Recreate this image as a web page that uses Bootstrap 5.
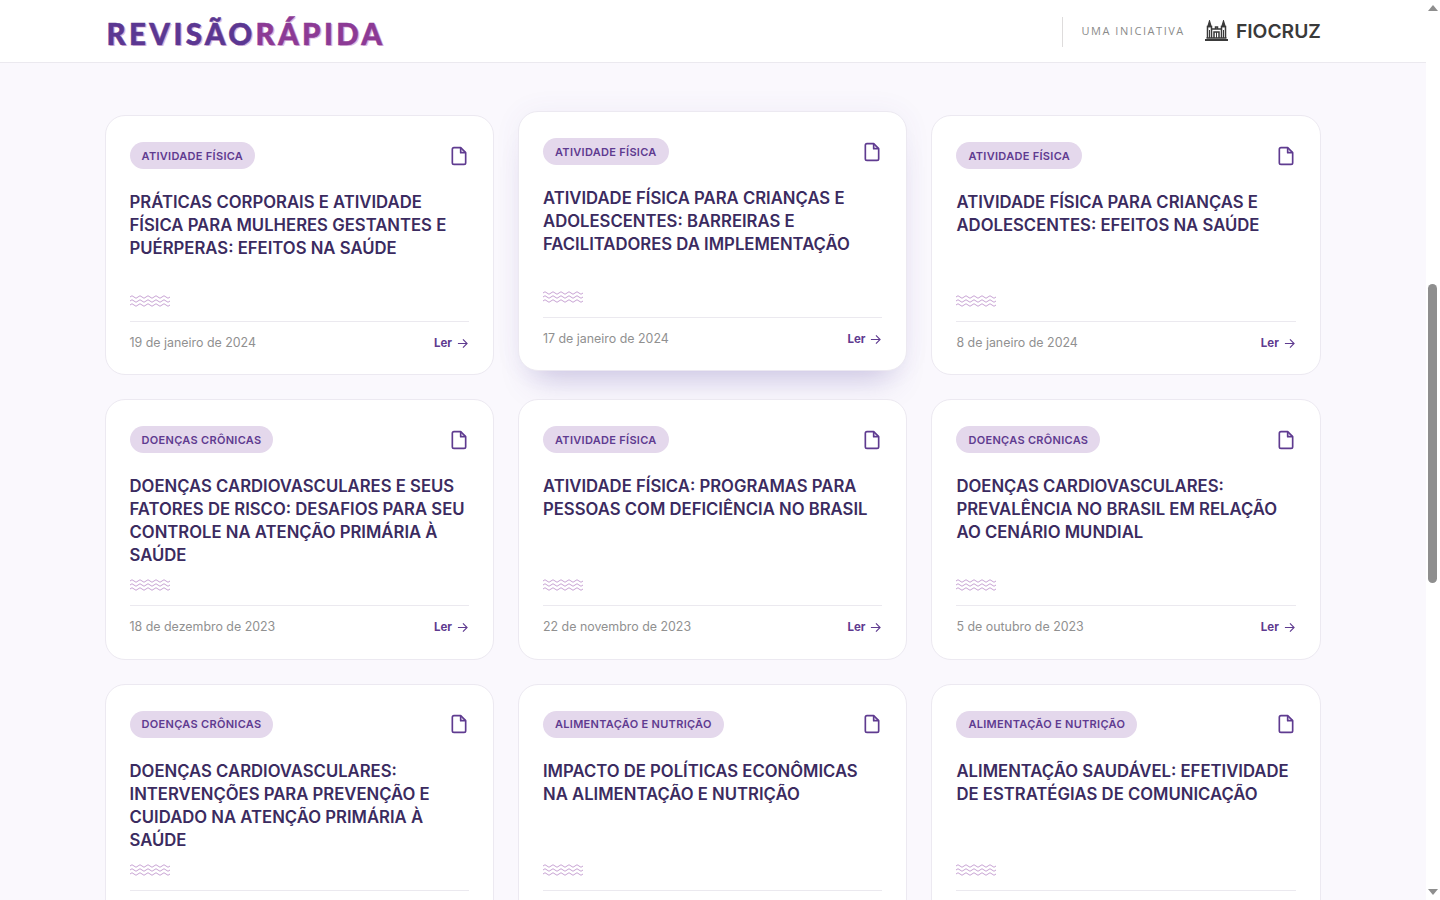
<!DOCTYPE html>
<html lang="pt-BR">
<head>
  <meta charset="UTF-8" />
  <meta name="viewport" content="width=device-width, initial-scale=1.0" />
  <title>Revisão Rápida</title>
  <link href="https://cdn.jsdelivr.net/npm/bootstrap@5.3.0/dist/css/bootstrap.min.css" rel="stylesheet">
  <style>
    html, body { height: 100%; overflow: hidden; }
    body { background: #fff; font-family: "Inter", "Liberation Sans", sans-serif; }
    .page-col { width: 1425.5px; height: 900px; overflow: hidden; background: #faf8fd; flex: none; }
    .top-bar { height: 63px; background: #fff; border-bottom: 1px solid #ebe9ef; padding: 0; }
    .wrap { max-width: 1240.4px; padding: 0 12px; }
    .logo-txt {
      font-family: "Lato", sans-serif; font-weight: 900; font-size: 29.5px; letter-spacing: 3.35px; line-height: 1;
      -webkit-text-stroke: .5px currentColor; margin-left: 2px; margin-top: 5px;
      text-shadow: 1.5px 1px 0 #dfb9df;
    }
    .logo-a { color: #5b3792; }
    .logo-b { color: #8c3a95; }
    .side-info { height: 30px; border-left: 1px solid #dedcdc; padding-left: 18px; margin-top: 1px; gap: 20px; }
    .side-info .lbl { font-size: 11px; letter-spacing: 1.55px; color: #8b8b8b; font-family: "Open Sans", sans-serif; }
    .side-info .org { font-size: 19.3px; font-weight: 600; color: #3a3a3a; line-height: 1; }
    .org-icon { margin-top: -2px; }
    .cards-area { padding-top: 52px; }
    .post-card { height: 260.45px; border: 1px solid #ece9f1; border-radius: 20px; background: #fff; }
    .post-card .card-body { padding: 26px 24px 0; }
    .post-card.raised { transform: translateY(-4px); box-shadow: 0 24px 32px -16px rgba(80, 60, 160, .26), 0 0 28px rgba(90, 70, 160, .06); }
    .tag-pill { background: #e4d8ec; color: #5f3b90; font-size: 11px; font-weight: 600; letter-spacing: .3px; padding: 7.5px 12px; line-height: 12px; }
    .post-title { font-size: 16.7px; font-weight: 600; line-height: 23px; color: #3b2b60; margin: 22px 0 0; height: 92px; }
    .wave { display: block; margin-top: 12px; }
    .post-foot { border-top: 1px solid #ebe9ef; margin-top: 14px; padding-top: 12px; }
    .post-date { font-size: 12.4px; color: #909090; }
    .read-link { font-size: 11.5px; font-weight: 700; color: #5f3b90; text-decoration: none; gap: 5px; margin-right: 1px; }
    .scroll-col { width: 14.5px; height: 900px; background: #fff; flex: none; }
    .arrow-up { border: 5px solid transparent; border-top: 0; border-bottom: 6px solid #8e8e8e; margin: 5px auto 0; width: 0; }
    .arrow-down { border: 5px solid transparent; border-bottom: 0; border-top: 6px solid #8e8e8e; margin: 0 auto 5px; width: 0; }
    .thumb { width: 9px; height: 299px; background: #8e8e8e; border-radius: 5px; margin: 273px 0 0 2.5px; }
  </style>
</head>

<body class="d-flex">
  <div class="page-col">
    <nav class="navbar top-bar">
      <div class="container-fluid wrap d-flex justify-content-between align-items-center">
        <span class="logo-txt"><span class="logo-a">REVISÃO</span><span class="logo-b">RÁPIDA</span></span>
        <div class="side-info d-flex align-items-center">
          <span class="lbl">UMA INICIATIVA</span>
          <span class="d-flex align-items-center gap-2">
            <svg class="org-icon" width="23" height="21" viewBox="0 0 23 21" fill="none" stroke="#3a3a3a" stroke-width="1.5">
              <path d="M0 20h23" stroke-width="2"/>
              <path d="M1.500 18h20"/>
              <path d="M2.500 18V6.500h4V18M16.500 18V6.500h4V18M6.500 9h10M9 18v-6h5v6M10.500 9V7h2v2" />
              <path d="M4.500 1.500 3 6.500h3zM18.500 1.500 17 6.500h3z" fill="#3a3a3a"/>
              <path d="M4.500 10v8M18.500 10v8M11.500 12v6" stroke-width="1"/>
            </svg>
            <span class="org">FIOCRUZ</span>
          </span>
        </div>
      </div>
    </nav>

    <div class="container-fluid wrap cards-area">
      <div id="cards" class="row g-4"></div>
    </div>
  </div>

  <div class="scroll-col d-flex flex-column">
    <div class="arrow-up"></div>
    <div class="thumb"></div>
    <div class="arrow-down mt-auto"></div>
  </div>

  <script>
    const posts = [
      ["ATIVIDADE FÍSICA", "PRÁTICAS CORPORAIS E ATIVIDADE FÍSICA PARA MULHERES GESTANTES E PUÉRPERAS: EFEITOS NA SAÚDE", "19 de janeiro de 2024"],
      ["ATIVIDADE FÍSICA", "ATIVIDADE FÍSICA PARA CRIANÇAS E ADOLESCENTES: BARREIRAS E FACILITADORES DA IMPLEMENTAÇÃO", "17 de janeiro de 2024"],
      ["ATIVIDADE FÍSICA", "ATIVIDADE FÍSICA PARA CRIANÇAS E ADOLESCENTES: EFEITOS NA SAÚDE", "8 de janeiro de 2024"],
      ["DOENÇAS CRÔNICAS", "DOENÇAS CARDIOVASCULARES E SEUS FATORES DE RISCO: DESAFIOS PARA SEU CONTROLE NA ATENÇÃO PRIMÁRIA À SAÚDE", "18 de dezembro de 2023"],
      ["ATIVIDADE FÍSICA", "ATIVIDADE FÍSICA: PROGRAMAS PARA PESSOAS COM DEFICIÊNCIA NO BRASIL", "22 de novembro de 2023"],
      ["DOENÇAS CRÔNICAS", "DOENÇAS CARDIOVASCULARES: PREVALÊNCIA NO BRASIL EM RELAÇÃO AO CENÁRIO MUNDIAL", "5 de outubro de 2023"],
      ["DOENÇAS CRÔNICAS", "DOENÇAS CARDIOVASCULARES: INTERVENÇÕES PARA PREVENÇÃO E CUIDADO NA ATENÇÃO PRIMÁRIA À SAÚDE", ""],
      ["ALIMENTAÇÃO E NUTRIÇÃO", "IMPACTO DE POLÍTICAS ECONÔMICAS NA ALIMENTAÇÃO E NUTRIÇÃO", ""],
      ["ALIMENTAÇÃO E NUTRIÇÃO", "ALIMENTAÇÃO SAUDÁVEL: EFETIVIDADE DE ESTRATÉGIAS DE COMUNICAÇÃO", ""]
    ];

    let wave = "";
    for (const y of [2, 6, 10]) {
      wave += `M0 ${y}`;
      for (let i = 0; i < 5; i++) wave += ` q2 -2.500 4 0 t4 0`;
      wave += " ";
    }

    const fileIcon = `<svg width="20" height="20" viewBox="0 0 24 24" fill="none" stroke="#5f3b90" stroke-width="2" stroke-linejoin="round"><path d="M14 2H6a2 2 0 0 0-2 2v16a2 2 0 0 0 2 2h12a2 2 0 0 0 2-2V8z"/><path d="M14 2v6h6"/></svg>`;
    const arrowIcon = `<svg width="11" height="11" viewBox="0 0 12 12" fill="none" stroke="#5f3b90" stroke-width="1.200"><path d="M1 6h10M6.500 1.500 11 6l-4.500 4.500"/></svg>`;

    // the third row runs past the fold, its date and link are never on screen
    document.getElementById("cards").innerHTML = posts.map((p, i) => `
      <div class="col-4">
        <div class="card post-card ${i === 1 ? "raised" : ""}">
          <div class="card-body d-flex flex-column">
            <div class="d-flex justify-content-between align-items-center">
              <span class="badge rounded-pill tag-pill">${p[0]}</span>
              ${fileIcon}
            </div>
            <h3 class="post-title">${p[1]}</h3>
            <svg class="wave" width="41" height="12" viewBox="0 0 41 12" fill="none" stroke="#b98cc8" stroke-width=".8"><path d="${wave}"/></svg>
            <div class="post-foot d-flex justify-content-between align-items-center">
              ${p[2] ? `<span class="post-date">${p[2]}</span>
              <a href="#" class="read-link d-flex align-items-center">Ler ${arrowIcon}</a>` : ""}
            </div>
          </div>
        </div>
      </div>`).join("");
  </script>
  <script src="https://cdn.jsdelivr.net/npm/bootstrap@5.3.0/dist/js/bootstrap.bundle.min.js"></script>
</body>
</html>
